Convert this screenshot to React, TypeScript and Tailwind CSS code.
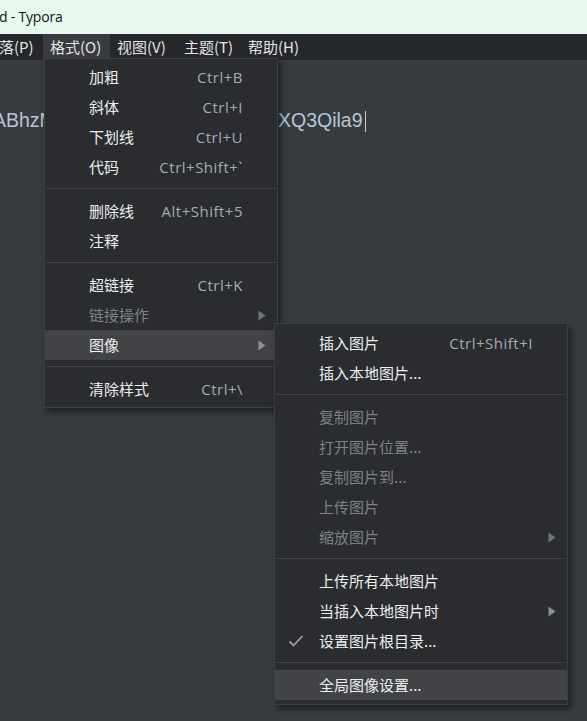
import React from "react";

type Item =
    | { sep: true }
    | {
          sep?: false;
          label: string;
          shortcut?: string;
          disabled?: boolean;
          submenu?: boolean;
          active?: boolean;
          checked?: boolean;
      };

const formatItems: Item[] = [
    { label: "加粗", shortcut: "Ctrl+B" },
    { label: "斜体", shortcut: "Ctrl+I" },
    { label: "下划线", shortcut: "Ctrl+U" },
    { label: "代码", shortcut: "Ctrl+Shift+`" },
    { sep: true },
    { label: "删除线", shortcut: "Alt+Shift+5" },
    { label: "注释" },
    { sep: true },
    { label: "超链接", shortcut: "Ctrl+K" },
    { label: "链接操作", disabled: true, submenu: true },
    { label: "图像", submenu: true, active: true },
    { sep: true },
    { label: "清除样式", shortcut: "Ctrl+\\" },
];

const imageItems: Item[] = [
    { label: "插入图片", shortcut: "Ctrl+Shift+I" },
    { label: "插入本地图片..." },
    { sep: true },
    { label: "复制图片", disabled: true },
    { label: "打开图片位置...", disabled: true },
    { label: "复制图片到...", disabled: true },
    { label: "上传图片", disabled: true },
    { label: "缩放图片", disabled: true, submenu: true },
    { sep: true },
    { label: "上传所有本地图片" },
    { label: "当插入本地图片时", submenu: true },
    { label: "设置图片根目录...", checked: true },
    { sep: true },
    { label: "全局图像设置...", active: true },
];

function Arrow({ dim }: { dim?: boolean }) {
    return (
        <svg width="8" height="11" viewBox="0 0 8 11" className="absolute right-[11px] top-[10px]">
            <path d="M0.5 0.5 L7.5 5.5 L0.5 10.5 Z" fill={dim ? "#6f7377" : "#8d9094"} />
        </svg>
    );
}

function Check() {
    return (
        <svg width="16" height="14" viewBox="0 0 16 14" className="absolute left-[13px] top-[8px]">
            <path d="M1.5 7.5 L5.5 11.5 L14.5 2" fill="none" stroke="#9a9da2" strokeWidth="1.8" />
        </svg>
    );
}

function Menu({ items, className }: { items: Item[]; className: string }) {
    return (
        <div
            className={
                "absolute bg-[#2a2c30] border border-[#3b3e42] shadow-[3px_4px_6px_rgba(0,0,0,0.45)] " +
                className
            }
        >
            {items.map((it, i) =>
                it.sep ? (
                    <div key={i} className="h-[14px] px-[1px] pt-[6px]">
                        <div className="h-px bg-[#3e4145]" />
                    </div>
                ) : (
                    <div
                        key={i}
                        className={
                            "relative h-[30px] flex items-center pl-[44px] pr-[34px] " +
                            (it.active ? "bg-[#414346]" : "")
                        }
                    >
                        {it.checked && <Check />}
                        <span
                            className={
                                "flex-1 text-[15px] leading-[20px] -mt-[1px] font-['Noto_Sans_CJK_SC',sans-serif] " +
                                (it.disabled ? "text-[#7d8187]" : "text-[#eceef0]")
                            }
                        >
                            {it.label}
                        </span>
                        {it.shortcut && (
                            <span className="text-[15px] leading-[20px] -mt-[1px] text-[#a4abb3] font-['Open_Sans',sans-serif] tracking-[0.5px]">
                                {it.shortcut}
                            </span>
                        )}
                        {it.submenu && <Arrow dim={it.disabled} />}
                    </div>
                )
            )}
        </div>
    );
}

export default function App() {
    return (
        <div className="relative w-[587px] h-[721px] overflow-hidden bg-[#363b3f] flex flex-col">
            <div className="h-[34px] bg-[#e9f8ef] flex items-center text-[14px] text-[#111] font-['Open_Sans',sans-serif] tracking-[-0.2px]">
                <span className="-ml-[1px] -mt-[1px]">d - Typora</span>
            </div>

            <div className="h-[26px] bg-[#25272b] flex items-stretch text-[15px] text-[#e2e4e6] font-['Noto_Sans_CJK_SC',sans-serif]">
                <div className="flex items-center w-[44px] -ml-[1px]">落(P)</div>
                <div className="flex items-center px-[7px] bg-[#393b3f] w-[67px]">格式(O)</div>
                <div className="flex items-center px-[7px] w-[67px]">视图(V)</div>
                <div className="flex items-center px-[7px] w-[64px]">主题(T)</div>
                <div className="flex items-center px-[7px]">帮助(H)</div>
            </div>

            <div className="flex-1 pt-[49px]">
                <div className="flex items-center h-[24px] text-[19.5px] text-[#b7c5d3] font-['Liberation_Sans',sans-serif] -ml-[7px]">
                    <span className="inline-block w-[285px] overflow-hidden whitespace-nowrap">ABhzMx7Tq2LmP9dKeRw4YsNvH</span>
                    <span>XQ3Qila9</span>
                    <span className="inline-block w-px h-[21px] bg-[#c3ccd5] ml-[2px]" />
                </div>
            </div>

            <Menu items={formatItems} className="left-[44px] top-[58px] w-[234px] pt-[3px] pb-[3px]" />
            <Menu items={imageItems} className="left-[274px] top-[323px] w-[294px] pt-[4px] pb-[4px]" />
        </div>
    );
}
